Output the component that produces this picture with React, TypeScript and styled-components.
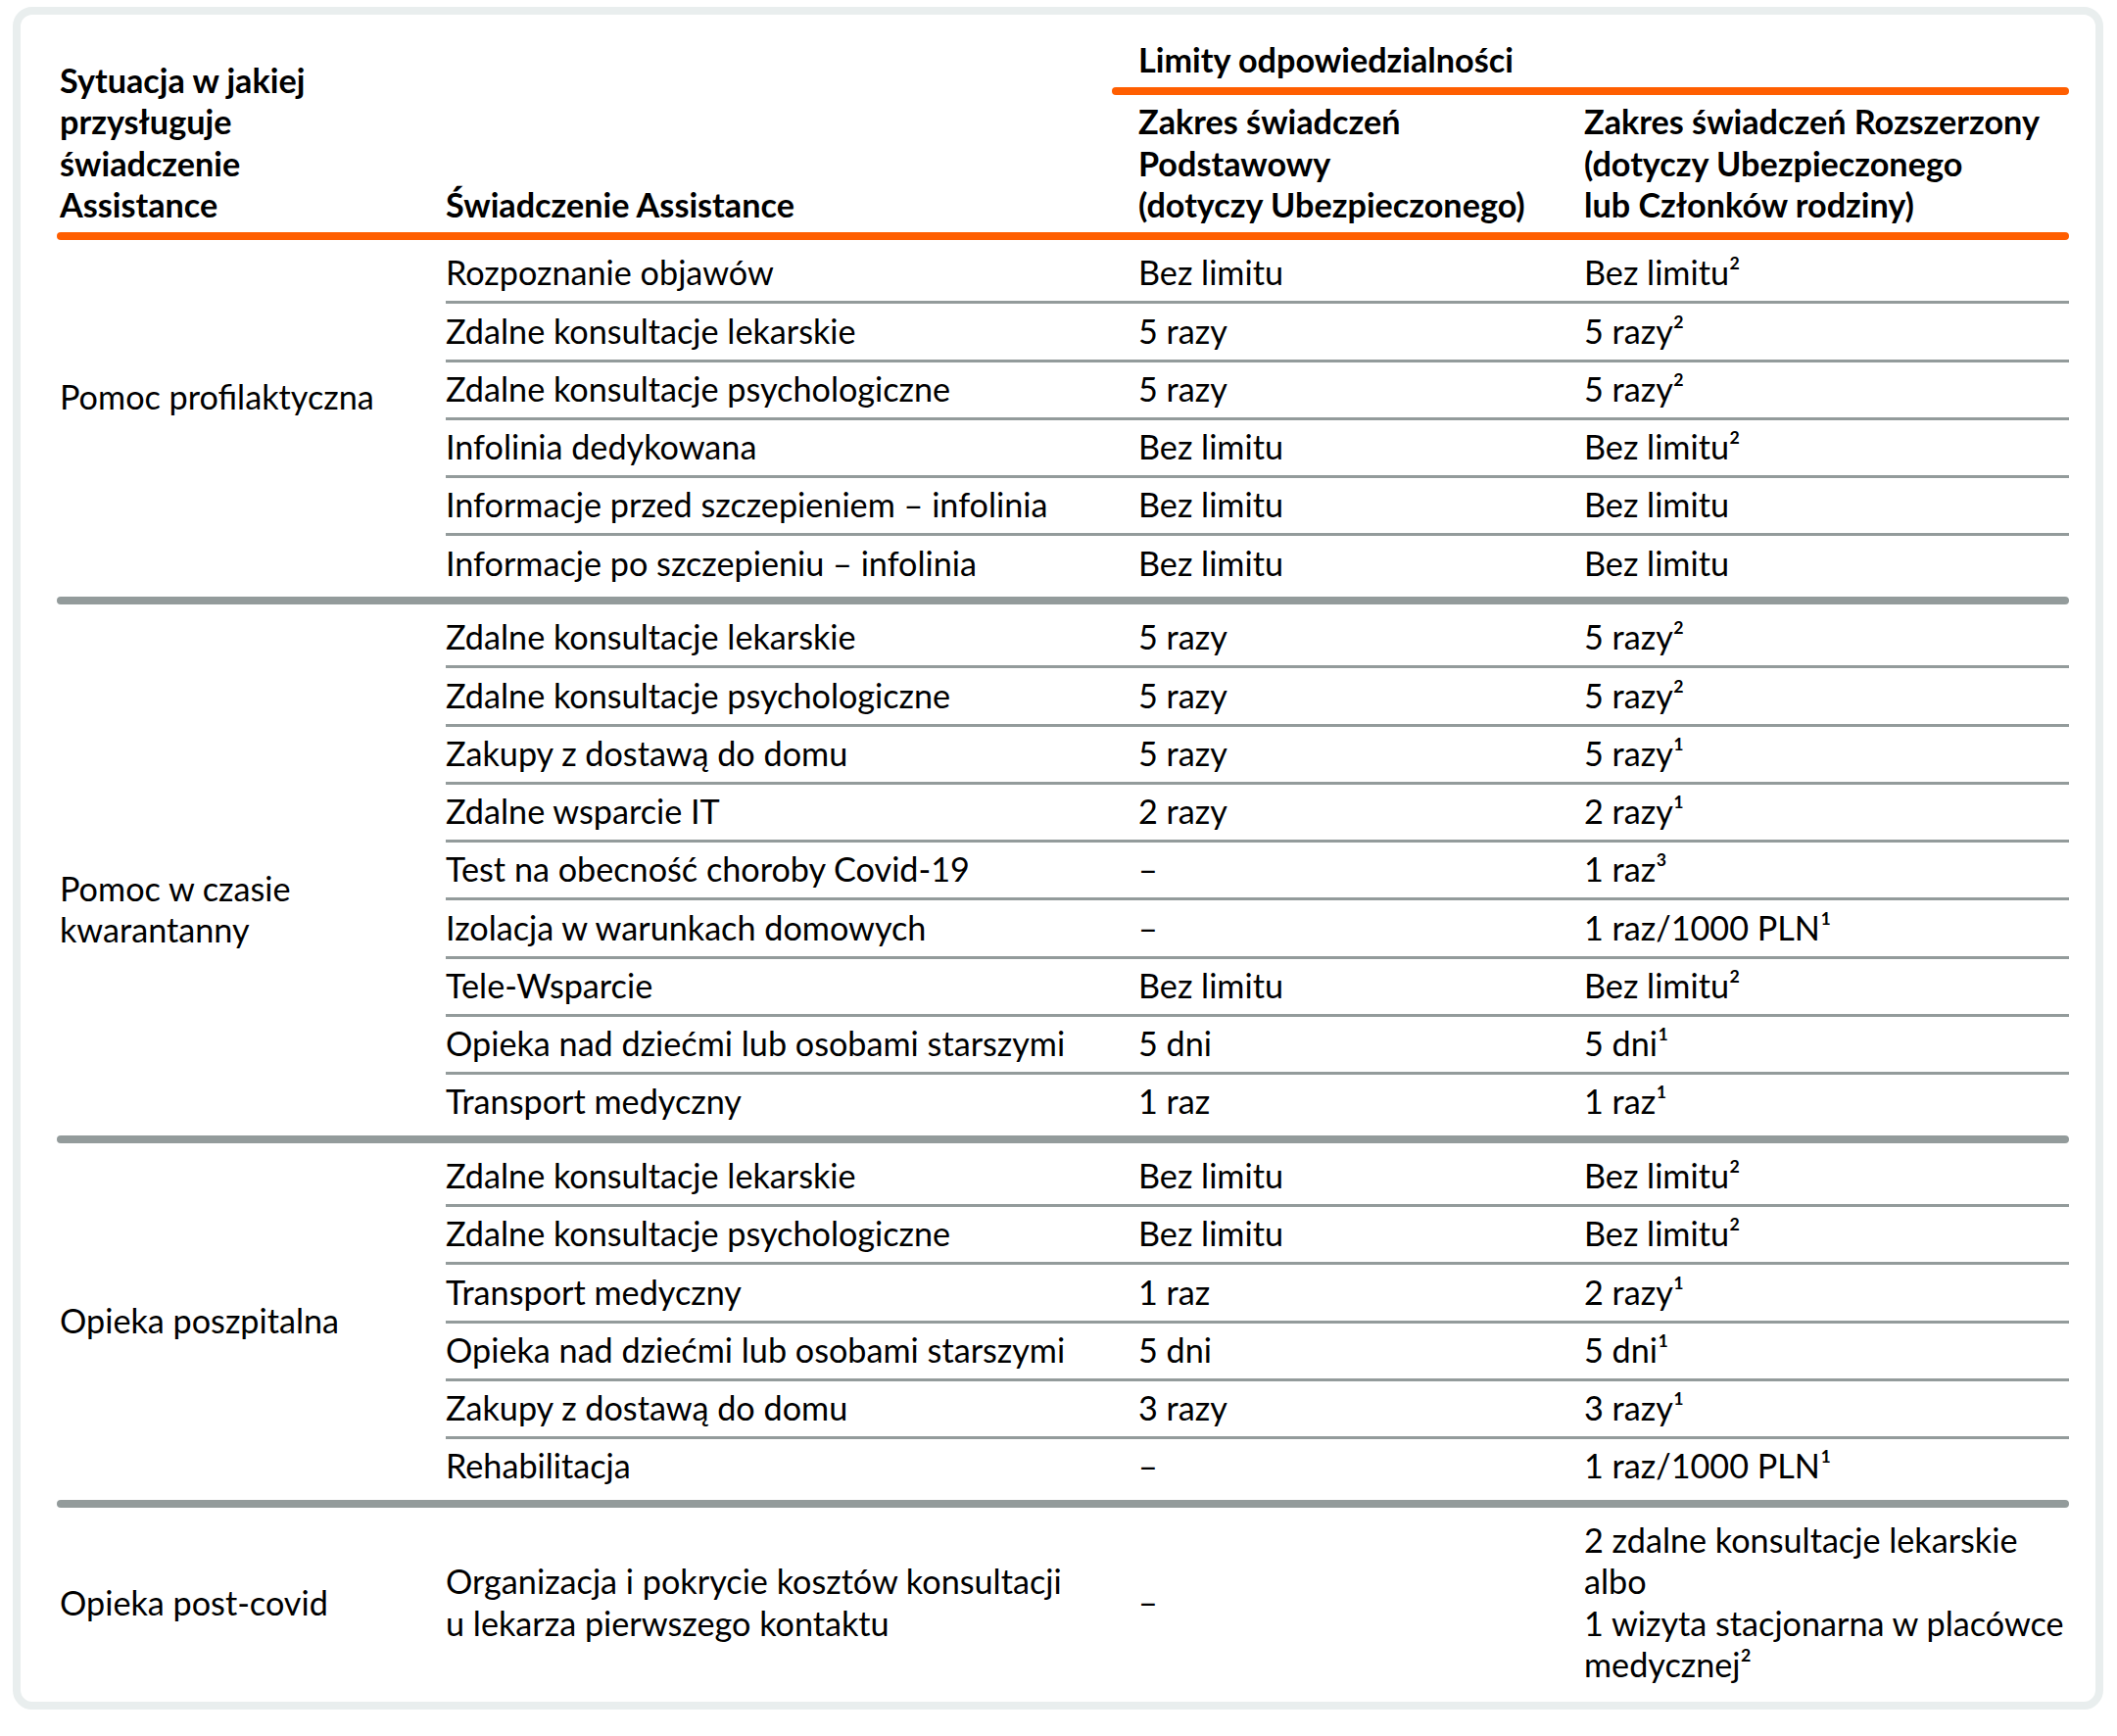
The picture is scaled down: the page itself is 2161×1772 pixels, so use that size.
import React from 'react';
import styled, { createGlobalStyle } from 'styled-components';

const GlobalStyle = createGlobalStyle`
  html, body { margin: 0; padding: 0; background: #ffffff; }
  body {
    font-family: Lato, "Liberation Sans", sans-serif;
    color: #000000;
  }
`;

const ORANGE = '#ff5e00';
const GREY = '#939b9b';

const Frame = styled.div`
  box-sizing: border-box;
  width: 2134px;
  margin: 7px 0 0 13px;
  border: 8px solid #e9eeee;
  border-radius: 20px;
  padding: 24.5px 27px 3px 37px;
  font-size: 34.2px;
  line-height: 42.25px;
  white-space: nowrap;
`;

const HeaderGrid = styled.div`
  display: grid;
  grid-template-columns: 397px 680px 1fr;
  align-items: end;
  line-height: 42.5px;
`;

const HeadCell = styled.div<{ $pad: number }>`
  font-weight: 700;
  padding: 0 0 6.5px ${(p) => p.$pad}px;
`;

const Limits = styled.div`
  display: flex;
  flex-direction: column;
`;

const LimitsTitle = styled.div`
  font-weight: 700;
  padding: 0 0 6.75px 27px;
`;

const Rule = styled.div<{ $color: string }>`
  height: 8px;
  border-radius: 4px;
  background: ${(p) => p.$color};
`;

const SubHeads = styled.div`
  display: grid;
  grid-template-columns: 455px 1fr;
  padding: 6.5px 0 6.5px;
`;

const SubHead = styled.div`
  font-weight: 700;
  padding-left: 27px;
`;

const Group = styled.div`
  display: grid;
  grid-template-columns: 397px 1fr;
`;

const GroupLabel = styled.div<{ $shift: number }>`
  display: flex;
  align-items: center;
  padding-left: 3px;
  padding-top: ${(p) => (p.$shift > 0 ? p.$shift * 2 : 0)}px;
  padding-bottom: ${(p) => (p.$shift < 0 ? -p.$shift * 2 : 0)}px;
`;

const Rows = styled.div`
  padding: 5.75px 0;
`;

const Row = styled.div`
  display: grid;
  grid-template-columns: 680px 455px 1fr;
  align-items: center;
  padding: 6.25px 0 7.75px;
  border-bottom: 3px solid ${GREY};
  &:last-child {
    border-bottom: none;
  }
`;

const Cell = styled.div<{ $pad: number }>`
  padding-left: ${(p) => p.$pad}px;
`;

type Lines = string[];
type GroupData = { label: Lines; shift: number; rows: [Lines, Lines, Lines][] };

const r = (a: string, b: string, c: string): [Lines, Lines, Lines] => [[a], [b], [c]];

const groups: GroupData[] = [
  {
    label: ['Pomoc profilaktyczna'],
    shift: -22,
    rows: [
      r('Rozpoznanie objawów', 'Bez limitu', 'Bez limitu²'),
      r('Zdalne konsultacje lekarskie', '5 razy', '5 razy²'),
      r('Zdalne konsultacje psychologiczne', '5 razy', '5 razy²'),
      r('Infolinia dedykowana', 'Bez limitu', 'Bez limitu²'),
      r('Informacje przed szczepieniem – infolinia', 'Bez limitu', 'Bez limitu'),
      r('Informacje po szczepieniu – infolinia', 'Bez limitu', 'Bez limitu'),
    ],
  },
  {
    label: ['Pomoc w czasie', 'kwarantanny'],
    shift: 40,
    rows: [
      r('Zdalne konsultacje lekarskie', '5 razy', '5 razy²'),
      r('Zdalne konsultacje psychologiczne', '5 razy', '5 razy²'),
      r('Zakupy z dostawą do domu', '5 razy', '5 razy¹'),
      r('Zdalne wsparcie IT', '2 razy', '2 razy¹'),
      r('Test na obecność choroby Covid-19', '–', '1 raz³'),
      r('Izolacja w warunkach domowych', '–', '1 raz/1000 PLN¹'),
      r('Tele-Wsparcie', 'Bez limitu', 'Bez limitu²'),
      r('Opieka nad dziećmi lub osobami starszymi', '5 dni', '5 dni¹'),
      r('Transport medyczny', '1 raz', '1 raz¹'),
    ],
  },
  {
    label: ['Opieka poszpitalna'],
    shift: -1,
    rows: [
      r('Zdalne konsultacje lekarskie', 'Bez limitu', 'Bez limitu²'),
      r('Zdalne konsultacje psychologiczne', 'Bez limitu', 'Bez limitu²'),
      r('Transport medyczny', '1 raz', '2 razy¹'),
      r('Opieka nad dziećmi lub osobami starszymi', '5 dni', '5 dni¹'),
      r('Zakupy z dostawą do domu', '3 razy', '3 razy¹'),
      r('Rehabilitacja', '–', '1 raz/1000 PLN¹'),
    ],
  },
  {
    label: ['Opieka post-covid'],
    shift: 0,
    rows: [
      [
        ['Organizacja i pokrycie kosztów konsultacji', 'u lekarza pierwszego kontaktu'],
        ['–'],
        ['2 zdalne konsultacje lekarskie', 'albo', '1 wizyta stacjonarna w placówce', 'medycznej²'],
      ],
    ],
  },
];

const Text: React.FC<{ lines: Lines }> = ({ lines }) => (
  <>
    {lines.map((l, i) => (
      <React.Fragment key={i}>
        {i > 0 && <br />}
        {l}
      </React.Fragment>
    ))}
  </>
);

export default function App() {
  return (
    <>
      <GlobalStyle />
      <Frame>
        <HeaderGrid>
          <HeadCell $pad={3}>
            <Text lines={['Sytuacja w jakiej', 'przysługuje', 'świadczenie', 'Assistance']} />
          </HeadCell>
          <HeadCell $pad={0}>Świadczenie Assistance</HeadCell>
          <Limits>
            <LimitsTitle>Limity odpowiedzialności</LimitsTitle>
            <Rule $color={ORANGE} />
            <SubHeads>
              <SubHead>
                <Text lines={['Zakres świadczeń', 'Podstawowy', '(dotyczy Ubezpieczonego)']} />
              </SubHead>
              <SubHead>
                <Text
                  lines={['Zakres świadczeń Rozszerzony', '(dotyczy Ubezpieczonego', 'lub Członków rodziny)']}
                />
              </SubHead>
            </SubHeads>
          </Limits>
        </HeaderGrid>
        <Rule $color={ORANGE} />
        {groups.map((g, gi) => (
          <React.Fragment key={gi}>
            {gi > 0 && <Rule $color={GREY} />}
            <Group>
              <GroupLabel $shift={g.shift}>
                <div>
                  <Text lines={g.label} />
                </div>
              </GroupLabel>
              <Rows>
                {g.rows.map((row, ri) => (
                  <Row key={ri}>
                    <Cell $pad={0}>
                      <Text lines={row[0]} />
                    </Cell>
                    <Cell $pad={27}>
                      <Text lines={row[1]} />
                    </Cell>
                    <Cell $pad={27}>
                      <Text lines={row[2]} />
                    </Cell>
                  </Row>
                ))}
              </Rows>
            </Group>
          </React.Fragment>
        ))}
      </Frame>
    </>
  );
}
